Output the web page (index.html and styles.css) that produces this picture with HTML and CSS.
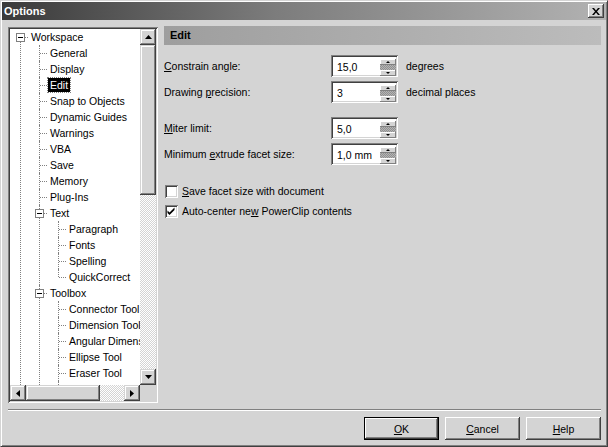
FILE: index.html
```html
<!DOCTYPE html>
<html>
    <head>
        <meta charset="utf-8">
        <title>Options</title>
        <link rel="stylesheet" href="styles.css">
    </head>
    <body>
        <div class="window">
            <div class="titlebar">
                <span class="title">Options</span>
                <span class="close">
                    <svg width="8" height="7" viewBox="0 0 8 7"><path d="M0 0h2l2 2.4 2-2.4h2L5 3.5 8 7H6L4 4.6 2 7H0l3-3.5z"/></svg>
                </span>
            </div>
            <div class="body">
                <div class="tree-box">
                    <div class="tree-main">
                        <div class="tree-view">
                            <ul class="tree">
                                <li class="first">
                                    <div class="node"><span class="toggle"></span><span class="label">Workspace</span></div>
                                    <ul>
                                        <li><div class="node"><span class="label">General</span></div></li>
                                        <li><div class="node"><span class="label">Display</span></div></li>
                                        <li><div class="node"><span class="label selected">Edit</span></div></li>
                                        <li><div class="node"><span class="label">Snap to Objects</span></div></li>
                                        <li><div class="node"><span class="label">Dynamic Guides</span></div></li>
                                        <li><div class="node"><span class="label">Warnings</span></div></li>
                                        <li><div class="node"><span class="label">VBA</span></div></li>
                                        <li><div class="node"><span class="label">Save</span></div></li>
                                        <li><div class="node"><span class="label">Memory</span></div></li>
                                        <li><div class="node"><span class="label">Plug-Ins</span></div></li>
                                        <li>
                                            <div class="node"><span class="toggle"></span><span class="label">Text</span></div>
                                            <ul>
                                                <li><div class="node"><span class="label">Paragraph</span></div></li>
                                                <li><div class="node"><span class="label">Fonts</span></div></li>
                                                <li><div class="node"><span class="label">Spelling</span></div></li>
                                                <li class="last"><div class="node"><span class="label">QuickCorrect</span></div></li>
                                            </ul>
                                        </li>
                                        <li>
                                            <div class="node"><span class="toggle"></span><span class="label">Toolbox</span></div>
                                            <ul>
                                                <li><div class="node"><span class="label">Connector Tool</span></div></li>
                                                <li><div class="node"><span class="label">Dimension Tool</span></div></li>
                                                <li><div class="node"><span class="label">Angular Dimension Tool</span></div></li>
                                                <li><div class="node"><span class="label">Ellipse Tool</span></div></li>
                                                <li><div class="node"><span class="label">Eraser Tool</span></div></li>
                                                <li><div class="node"><span class="label">Freehand/Bezier Tool</span></div></li>
                                            </ul>
                                        </li>
                                    </ul>
                                </li>
                            </ul>
                        </div>
                        <div class="vscroll">
                            <span class="sb-btn">
                                <svg width="7" height="4" viewBox="0 0 7 4"><path d="M3.5 0L7 4H0z"/></svg>
                            </span>
                            <span class="sb-thumb v-thumb"></span>
                            <span class="sb-track"></span>
                            <span class="sb-btn">
                                <svg width="7" height="4" viewBox="0 0 7 4"><path d="M0 0h7L3.5 4z"/></svg>
                            </span>
                        </div>
                    </div>
                    <div class="hscroll-row">
                        <div class="hscroll">
                            <span class="sb-btn">
                                <svg width="4" height="7" viewBox="0 0 4 7"><path d="M4 0v7L0 3.5z"/></svg>
                            </span>
                            <span class="sb-thumb h-thumb"></span>
                            <span class="sb-track"></span>
                            <span class="sb-btn">
                                <svg width="4" height="7" viewBox="0 0 4 7"><path d="M0 0l4 3.5L0 7z"/></svg>
                            </span>
                        </div>
                        <span class="corner"></span>
                    </div>
                </div>

                <div class="panel">
                    <div class="panel-header">Edit</div>

                    <div class="form">
                        <span><u>C</u>onstrain angle:</span>
                        <div class="spin">
                            <span class="spin-value">15,0</span>
                            <span class="spin-buttons"><span class="spin-up"></span><span class="spin-mid"></span><span class="spin-down"></span></span>
                        </div>
                        <span class="unit">degrees</span>

                        <span>Drawing <u>p</u>recision:</span>
                        <div class="spin">
                            <span class="spin-value">3</span>
                            <span class="spin-buttons"><span class="spin-up"></span><span class="spin-mid"></span><span class="spin-down"></span></span>
                        </div>
                        <span class="unit">decimal places</span>
                    </div>

                    <div class="form form-second">
                        <span><u>M</u>iter limit:</span>
                        <div class="spin">
                            <span class="spin-value">5,0</span>
                            <span class="spin-buttons"><span class="spin-up"></span><span class="spin-mid"></span><span class="spin-down"></span></span>
                        </div>
                        <span class="unit"></span>

                        <span>Minimum <u>e</u>xtrude facet size:</span>
                        <div class="spin">
                            <span class="spin-value">1,0 mm</span>
                            <span class="spin-buttons"><span class="spin-up"></span><span class="spin-mid"></span><span class="spin-down"></span></span>
                        </div>
                        <span class="unit"></span>
                    </div>

                    <div class="checks">
                        <div class="check-row">
                            <span class="checkbox"></span>
                            <span><u>S</u>ave facet size with document</span>
                        </div>
                        <div class="check-row">
                            <span class="checkbox">
                                <svg width="9" height="9" viewBox="0 0 9 9"><path d="M0.5 3.5l2 2L7.5 0.5v2.5l-5 5-2-2z"/></svg>
                            </span>
                            <span>Auto-center ne<u>w</u> PowerClip contents</span>
                        </div>
                    </div>
                </div>
            </div>

            <div class="separator"></div>

            <div class="buttons">
                <button class="button button-default"><u>O</u>K</button>
                <button class="button"><u>C</u>ancel</button>
                <button class="button"><u>H</u>elp</button>
            </div>
        </div>
    </body>
</html>
```

FILE: styles.css
```css
*{
    padding: 0;
    margin: 0;
    box-sizing: border-box;
}
html { font-family: "Liberation Sans", Arial, sans-serif; font-size: 10.5px; color: #000; }
body { background: #d4d4d4; width: 608px; height: 447px; overflow: hidden; }

.window{
    width: 608px;
    height: 447px;
    background: #d4d4d4;
    border: 1px solid;
    border-color: #d4d4d4 #404040 #404040 #d4d4d4;
    box-shadow: inset 1px 1px #fff, inset -1px -1px #808080;
    padding: 1px;
    display: flex;
    flex-direction: column;
}

/* title bar */
.titlebar{
    height: 18px;
    display: flex;
    align-items: center;
    justify-content: space-between;
    padding: 0 2px 0 2px;
    background: linear-gradient(to right, #3a3a3a 0%, #7c7c7c 45%, #b2b2b2 100%);
}
.title{ color: #fff; font-weight: bold; font-size: 11px; }
.close{
    width: 16px;
    height: 14px;
    display: flex;
    align-items: center;
    justify-content: center;
    background: #d4d4d4;
    box-shadow: inset -1px -1px #404040, inset 1px 1px #fff, inset -2px -2px #808080;
}

/* main area */
.body{
    display: flex;
    gap: 6px;
    margin-top: 6px;
    padding: 0 5px 0 6px;
    height: 377px;
}

/* tree */
.tree-box{
    width: 150px;
    height: 376px;
    margin-top: 1px;
    padding: 2px;
    background: #fff;
    box-shadow: inset 1px 1px #808080, inset -1px -1px #fff, inset 2px 2px #404040, inset -2px -2px #d4d4d4;
    display: flex;
    flex-direction: column;
}
.tree-main{ display: flex; height: 356px; }
.tree-view{ width: 130px; overflow: hidden; background: #fff; }

.tree, .tree ul{ list-style: none; }
.tree ul{ padding-left: 19px; }
.tree li{ position: relative; }
.tree li::before{
    content: "";
    position: absolute;
    left: 10px;
    top: 0;
    bottom: 0;
    border-left: 1px dotted #808080;
}
.tree li.first::before{ top: 8px; }
.tree li.last::before{ bottom: auto; height: 8px; }
.node{
    position: relative;
    height: 16px;
    padding-left: 19px;
    display: flex;
    align-items: center;
}
.node::before{
    content: "";
    position: absolute;
    left: 11px;
    top: 8px;
    width: 7px;
    border-top: 1px dotted #808080;
}
.toggle{
    position: absolute;
    left: 6px;
    top: 4px;
    width: 9px;
    height: 9px;
    border: 1px solid #808080;
    background: #fff;
    z-index: 1;
}
.toggle::after{
    content: "";
    position: absolute;
    left: 1px;
    top: 3px;
    width: 5px;
    height: 1px;
    background: #000;
}
.label{ padding: 0 2px; line-height: 14px; white-space: nowrap; }
.selected{ background: #000; color: #fff; outline: 1px dotted #808080; }

/* scrollbars */
.vscroll{ width: 16px; display: flex; flex-direction: column; }
.hscroll-row{ display: flex; height: 16px; }
.hscroll{ width: 130px; display: flex; }
.corner{ width: 16px; background: #d4d4d4; }
.sb-btn, .sb-thumb{
    background: #d4d4d4;
    box-shadow: inset -1px -1px #404040, inset 1px 1px #d4d4d4, inset -2px -2px #808080, inset 2px 2px #fff;
}
.sb-btn{
    width: 16px;
    height: 16px;
    flex: none;
    display: flex;
    align-items: center;
    justify-content: center;
}
.v-thumb{ height: 150px; flex: none; }
.h-thumb{ width: 74px; flex: none; }
.sb-track{
    flex: 1;
    background: repeating-conic-gradient(#fff 0 25%, #d4d4d4 0 50%) 0 0 / 2px 2px;
}

/* right panel */
.panel{ flex: 1; }
.panel-header{
    height: 19px;
    line-height: 19px;
    padding-left: 6px;
    font-weight: bold;
    font-size: 11px;
    background: linear-gradient(to right, #9e9e9e 0%, #aaaaaa 40%, #bcbcbc 100%);
}
.form{
    display: grid;
    grid-template-columns: 167px 67px auto;
    row-gap: 4px;
    align-items: center;
    margin-top: 10px;
}
.form-second{ margin-top: 14px; }
.unit{ padding-left: 8px; }

.spin{
    height: 22px;
    background: #fff;
    box-shadow: inset 1px 1px #808080, inset -1px -1px #fff, inset 2px 2px #404040, inset -2px -2px #d4d4d4;
    display: flex;
    align-items: center;
    justify-content: space-between;
    padding: 2px 2px 0 6px;
}
.spin-buttons{ width: 16px; height: 17px; display: flex; flex-direction: column; }
.spin-up, .spin-down{
    height: 6px;
    background: #d4d4d4;
    box-shadow: inset -1px -1px #808080, inset 1px 1px #fff;
    position: relative;
}
.spin-mid{ height: 5px; background: repeating-conic-gradient(#909090 0 25%, #b4b4b4 0 50%) 0 0 / 2px 2px; }
.spin-up::after, .spin-down::after{
    content: "";
    position: absolute;
    left: 6px;
    top: 2px;
    border-left: 2px solid transparent;
    border-right: 2px solid transparent;
}
.spin-up::after{ border-bottom: 2px solid #000; }
.spin-down::after{ border-top: 2px solid #000; }

.checks{ margin-top: 16px; padding-left: 1px; }
.check-row{ height: 20px; display: flex; align-items: center; gap: 4px; }
.checkbox{
    width: 13px;
    height: 13px;
    background: #fff;
    box-shadow: inset 1px 1px #808080, inset -1px -1px #fff, inset 2px 2px #404040, inset -2px -2px #d4d4d4;
    display: flex;
    align-items: center;
    justify-content: center;
}

/* bottom */
.separator{
    margin: 6px 5px 0 6px;
    height: 2px;
    border-top: 1px solid #808080;
    border-bottom: 1px solid #fff;
}
.buttons{
    display: flex;
    justify-content: flex-end;
    gap: 6px;
    margin-top: 6px;
    padding-right: 5px;
}
.button{
    width: 75px;
    height: 23px;
    font-family: "Liberation Sans", Arial, sans-serif;
    font-size: 10.5px;
    color: #000;
    background: #d4d4d4;
    border: none;
    box-shadow: inset -1px -1px #404040, inset 1px 1px #fff, inset -2px -2px #808080;
}
.button-default{
    border: 1px solid #000;
    box-shadow: inset -1px -1px #404040, inset 1px 1px #fff, inset -2px -2px #808080;
}
```
